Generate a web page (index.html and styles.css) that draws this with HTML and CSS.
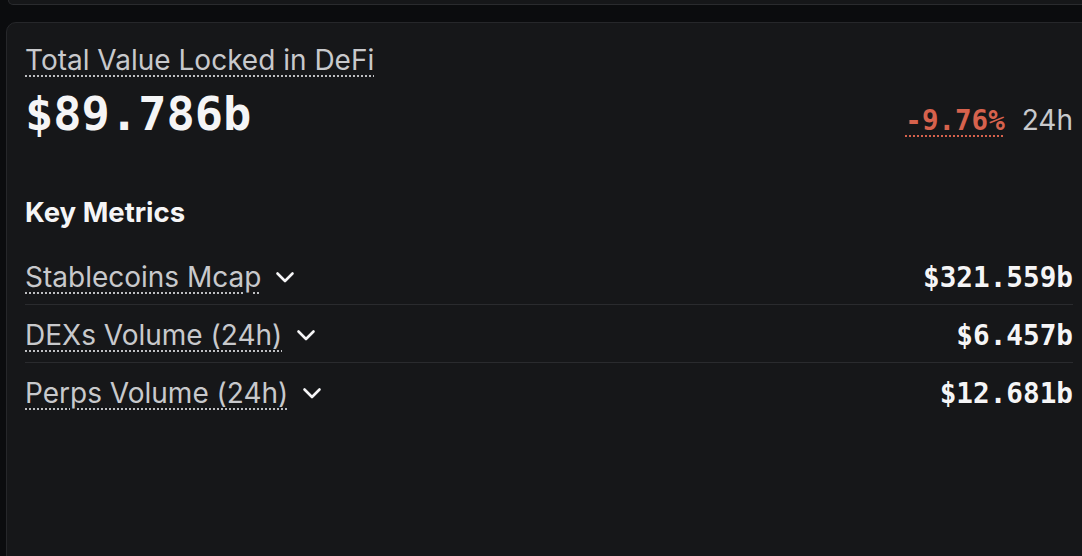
FILE: index.html
```html
<!DOCTYPE html>
<html lang="en">
<head>
<meta charset="utf-8">
<title>DeFi Overview</title>
<link rel="stylesheet" href="styles.css">
</head>
<body>
<div class="page">
  <div class="prev-card"></div>
  <section class="card">
    <div class="header">
      <div class="tvl">
        <span class="tvl-label">Total Value Locked in DeFi</span>
        <span class="tvl-value">$89.786b</span>
      </div>
      <div class="change">
        <span class="change-pct">-9.76%</span>
        <span class="change-period">24h</span>
      </div>
    </div>
    <h2 class="section-title">Key Metrics</h2>
    <div class="metrics">
      <div class="metric">
        <div class="metric-name"><span class="metric-label">Stablecoins Mcap</span><svg class="chevron" viewBox="0 0 20 13" width="20" height="13"><path d="M2.5 2.5l7.5 7.5 7.5-7.5" fill="none" stroke="currentColor" stroke-width="2.6" stroke-linecap="round" stroke-linejoin="round"/></svg></div>
        <span class="metric-value">$321.559b</span>
      </div>
      <div class="metric">
        <div class="metric-name"><span class="metric-label">DEXs Volume (24h)</span><svg class="chevron" viewBox="0 0 20 13" width="20" height="13"><path d="M2.5 2.5l7.5 7.5 7.5-7.5" fill="none" stroke="currentColor" stroke-width="2.6" stroke-linecap="round" stroke-linejoin="round"/></svg></div>
        <span class="metric-value">$6.457b</span>
      </div>
      <div class="metric">
        <div class="metric-name"><span class="metric-label">Perps Volume (24h)</span><svg class="chevron" viewBox="0 0 20 13" width="20" height="13"><path d="M2.5 2.5l7.5 7.5 7.5-7.5" fill="none" stroke="currentColor" stroke-width="2.6" stroke-linecap="round" stroke-linejoin="round"/></svg></div>
        <span class="metric-value">$12.681b</span>
      </div>
    </div>
  </section>
</div>
</body>
</html>
```

FILE: styles.css
```css
html, body {
  margin: 0;
  padding: 0;
  height: 100%;
  overflow: hidden;
  background: #0b0c0e;
}

.page {
  padding: 0 0 0 6px;
  font-family: Inter, "Noto Sans", sans-serif;
  color: #c8c9cc;
}

.prev-card {
  height: 4px;
  margin-left: 2px;
  margin-right: -12px;
  background: #161719;
  border: 1px solid #2a2b2e;
  border-top: none;
  border-radius: 0 0 9px 9px;
}

.card {
  margin-top: 17px;
  margin-right: -12px;
  min-height: 620px;
  background: #161719;
  border: 1px solid #26272a;
  border-radius: 10px;
  padding: 19px 20px 0 18px;
}

.header {
  display: flex;
  justify-content: space-between;
  align-items: last baseline;
}

.tvl {
  display: flex;
  flex-direction: column;
  align-items: flex-start;
}

.tvl-label {
  font-size: 28px;
  line-height: 36px;
  color: #c8c9cc;
  text-decoration: underline dotted #bdbec1;
  text-decoration-thickness: 2px;
  text-underline-offset: 5px;
}

.tvl-value {
  margin-top: 10px;
  font-family: "DejaVu Sans Mono", "Liberation Mono", monospace;
  font-weight: 700;
  font-size: 47px;
  line-height: 52px;
  color: #f5f5f6;
}

.change {
  display: flex;
  align-items: baseline;
  gap: 17px;
}

.change-pct {
  font-family: "DejaVu Sans Mono", "Liberation Mono", monospace;
  font-weight: 700;
  font-size: 27.5px;
  color: #d6624d;
  text-decoration: underline dotted #d6624d;
  text-decoration-thickness: 2px;
  text-underline-offset: 5px;
}

.change-period {
  font-size: 28px;
  color: #c8c9cc;
}

.section-title {
  margin: 54px 0 0;
  font-size: 27.5px;
  line-height: 36px;
  font-weight: 700;
  color: #f5f5f6;
}

.metrics {
  margin-top: 17px;
  display: flex;
  flex-direction: column;
}

.metric {
  display: flex;
  justify-content: space-between;
  align-items: baseline;
  padding: 12px 0 8px;
  border-bottom: 1px solid #2a2b2e;
}

.metric:last-child {
  border-bottom: none;
}

.metric-name {
  display: flex;
  align-items: center;
  gap: 14px;
}

.metric-label {
  font-size: 28px;
  line-height: 36px;
  color: #c8c9cc;
  text-decoration: underline dotted #bdbec1;
  text-decoration-thickness: 2px;
  text-underline-offset: 5px;
}

.chevron {
  color: #f5f5f6;
  flex-shrink: 0;
}

.metric-value {
  font-family: "DejaVu Sans Mono", "Liberation Mono", monospace;
  font-weight: 700;
  font-size: 27.7px;
  line-height: 36px;
  color: #f5f5f6;
}
```
